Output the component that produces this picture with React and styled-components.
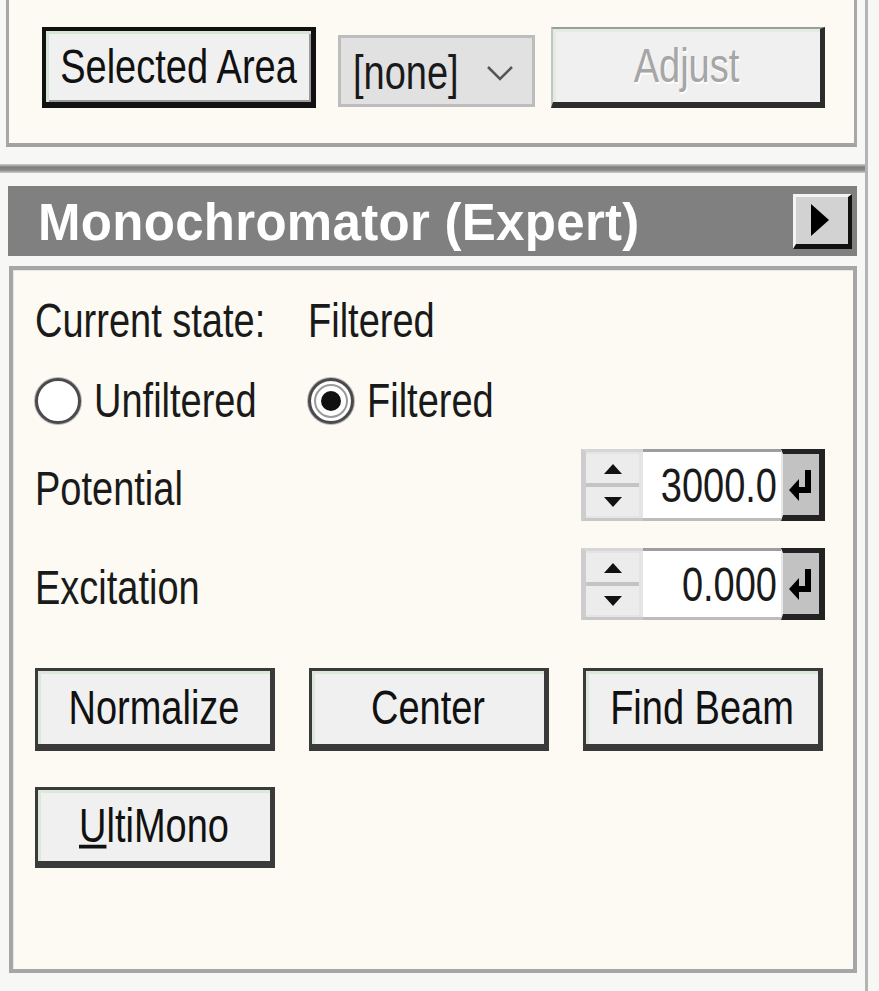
import React from 'react';
import styled, { createGlobalStyle, css } from 'styled-components';

const GlobalStyle = createGlobalStyle`
  html, body {
    margin: 0;
    padding: 0;
    background: #f7f7f6;
  }
  body {
    font-family: "Liberation Sans", Arial, sans-serif;
    color: #1a1a1a;
  }
  * { box-sizing: border-box; }
`;

const App = () => {
  return (
    <>
      <GlobalStyle />
      <Page>
        <Window>
          <TopPanel>
            <ButtonRow>
              <Button $kind="default" $w={274} $h={81}>
                <Txt>Selected Area</Txt>
              </Button>
              <Dropdown>
                <Txt>[none]</Txt>
                <svg width="28" height="16" viewBox="0 0 28 16">
                  <polyline points="2,2 14,14 26,2" fill="none" stroke="#555" strokeWidth="2.5" />
                </svg>
              </Dropdown>
              <Button $kind="disabled" $w={274} $h={81}>
                <Txt>Adjust</Txt>
              </Button>
            </ButtonRow>
          </TopPanel>

          <Gap $h={17} />
          <Rule />
          <Gap $h={13} />

          <Header>
            <HeaderTitle>Monochromator (Expert)</HeaderTitle>
            <HeaderButton>
              <svg width="22" height="34" viewBox="0 0 22 34">
                <polygon points="2,1 20,17 2,33" fill="#000" />
              </svg>
            </HeaderButton>
          </Header>

          <Gap $h={10} />

          <ContentBox>
            <TwoCol $mt={23} $h={56}>
              <Txt>Current state:</Txt>
              <Txt>Filtered</Txt>
            </TwoCol>

            <TwoCol $mt={24} $h={56}>
              <RadioItem>
                <Radio />
                <Txt>Unfiltered</Txt>
              </RadioItem>
              <RadioItem>
                <Radio $checked />
                <Txt>Filtered</Txt>
              </RadioItem>
            </TwoCol>

            <FieldRow $mt={20}>
              <Txt>Potential</Txt>
              <Spinner value="3000.0" />
            </FieldRow>

            <FieldRow $mt={27}>
              <Txt>Excitation</Txt>
              <Spinner value="0.000" />
            </FieldRow>

            <ButtonGrid $mt={48}>
              <Button $h={83}><Txt>Normalize</Txt></Button>
              <Button $h={83}><Txt>Center</Txt></Button>
              <Button $h={83}><Txt>Find Beam</Txt></Button>
            </ButtonGrid>

            <ButtonGrid $mt={36}>
              <Button $h={81}><Txt><u>U</u>ltiMono</Txt></Button>
            </ButtonGrid>
          </ContentBox>
        </Window>
      </Page>
    </>
  );
};

const Spinner = ({ value }) => (
  <SpinBox>
    <SpinArrows>
      <SpinHalf>
        <svg width="20" height="12" viewBox="0 0 20 12">
          <polygon points="10,1 19,11 1,11" fill="#111" />
        </svg>
      </SpinHalf>
      <SpinHalf $bottom>
        <svg width="20" height="12" viewBox="0 0 20 12">
          <polygon points="1,1 19,1 10,11" fill="#111" />
        </svg>
      </SpinHalf>
    </SpinArrows>
    <SpinField>
      <Txt>{value}</Txt>
    </SpinField>
    <EnterButton>
      <svg width="26" height="36" viewBox="0 0 26 36">
        <rect x="17" y="3" width="6" height="23" fill="#000" />
        <rect x="9" y="20" width="14" height="6" fill="#000" />
        <polygon points="1,23 11,12 11,34" fill="#000" />
      </svg>
    </EnterButton>
  </SpinBox>
);

// Styled components
const Page = styled.div`
  width: 879px;
  height: 991px;
  overflow: hidden;
  background: #f7f7f6;
`;

const Window = styled.div`
  width: 868px;
  height: 100%;
  padding: 0 8px 0 6px;
  border-right: 3px solid #b4b4b4;
  display: flex;
  flex-direction: column;
`;

const Txt = styled.span`
  display: inline-block;
  font-size: 38px;
  line-height: 1;
  transform: scaleY(1.25);
  white-space: nowrap;
`;

const TopPanel = styled.div`
  height: 147px;
  background: #fcfaf2;
  border-left: 3px solid #a8a8a8;
  border-right: 3px solid #a8a8a8;
  border-bottom: 4px solid #a2a2a2;
  padding: 27px 0 0 33px;
`;

const ButtonRow = styled.div`
  display: flex;
  align-items: flex-start;
`;

const Button = styled.div`
  width: ${p => (p.$w ? `${p.$w}px` : '100%')};
  height: ${p => p.$h}px;
  display: flex;
  align-items: center;
  justify-content: center;
  background: #f0f0f0;
  border-style: solid;
  border-color: #3a3a3a;
  border-width: 3px 5px 7px 3px;
  box-shadow: inset 3px 3px 0 #dce9da;
  color: #111;

  ${p => p.$kind === 'default' && css`
    border-color: #111;
    border-width: 4px 5px 6px 4px;
    box-shadow: inset 3px 3px 0 #d6e6d4, inset -2px -2px 0 #9a9a9a;
  `}

  ${p => p.$kind === 'disabled' && css`
    border-color: #9c9c9c #2c2c2c #2c2c2c #c4c4c4;
    border-width: 2px 5px 6px 2px;
    box-shadow: inset 3px 3px 0 #e2ece0;
    color: #a6a6a6;
    text-shadow: 1px 1px 0 #ffffff;
  `}
`;

const Dropdown = styled.div`
  width: 197px;
  height: 72px;
  margin: 8px 16px 0 22px;
  background: #e1e1e1;
  border: 3px solid #bdbdbd;
  display: flex;
  align-items: center;
  justify-content: space-between;
  padding: 4px 18px 0 12px;
  color: #1a1a1a;
`;

const Gap = styled.div`
  height: ${p => p.$h}px;
  flex-shrink: 0;
`;

const Rule = styled.div`
  height: 9px;
  margin: 0 -8px 0 -6px;
  background: linear-gradient(#d0d0d0, #7e7e7e 35%, #8c8c8c 70%, #cfcfcf);
`;

const Header = styled.div`
  height: 70px;
  margin-left: 2px;
  background: #808080;
  display: flex;
  align-items: center;
  justify-content: space-between;
  padding: 0 5px 0 30px;
`;

const HeaderTitle = styled.div`
  color: #ffffff;
  font-size: 51px;
  font-weight: bold;
  letter-spacing: 0.3px;
  line-height: 1;
  margin-top: 2px;
`;

const HeaderButton = styled.div`
  width: 59px;
  height: 55px;
  background: #d2d2d2;
  border-style: solid;
  border-width: 3px 4px 5px 3px;
  border-color: #f4f4f4 #111 #111 #f4f4f4;
  display: flex;
  align-items: center;
  justify-content: center;
  padding-right: 4px;
`;

const ContentBox = styled.div`
  height: 707px;
  margin-left: 3px;
  background: #fcfaf2;
  border: 4px solid #a6a6a6;
  box-shadow: inset 1px 1px 0 #e6e6e6;
  padding: 0 28px 0 22px;
  display: flex;
  flex-direction: column;
`;

const TwoCol = styled.div`
  margin-top: ${p => p.$mt}px;
  height: ${p => p.$h}px;
  display: grid;
  grid-template-columns: 273px auto;
  align-items: center;
`;

const RadioItem = styled.div`
  display: flex;
  align-items: center;
  gap: 13px;
`;

const Radio = styled.span`
  width: 46px;
  height: 46px;
  border-radius: 50%;
  background: #ffffff;
  border: 3px solid #4a4a4a;
  box-shadow: 0 0 0 1px #b8b8b8;
  position: relative;
  flex-shrink: 0;

  ${p => p.$checked && css`
    box-shadow: 0 0 0 1px #b8b8b8, inset 0 0 0 3px #ffffff, inset 0 0 0 5px #9a9a9a;
    &::after {
      content: '';
      position: absolute;
      left: 50%;
      top: 50%;
      width: 20px;
      height: 20px;
      margin: -10px 0 0 -10px;
      border-radius: 50%;
      background: #111;
    }
  `}
`;

const FieldRow = styled.div`
  margin-top: ${p => p.$mt}px;
  display: flex;
  align-items: center;
  justify-content: space-between;

  & > ${Txt} {
    margin-top: 8px;
  }
`;

const SpinBox = styled.div`
  width: 244px;
  height: 72px;
  display: flex;
`;

const SpinArrows = styled.div`
  width: 62px;
  display: flex;
  flex-direction: column;
  background: #e4e4e4;
  border-left: 5px solid #cdcdcd;
  border-top: 3px solid #d6d6d6;
  border-bottom: 3px solid #c8c8c8;
  padding: 2px 4px 2px 0;
`;

const SpinHalf = styled.div`
  flex: 1;
  display: flex;
  align-items: center;
  justify-content: center;
  background: #ececec;
  ${p => p.$bottom && css`
    border-top: 4px solid #c4c4c4;
  `}
`;

const SpinField = styled.div`
  width: 138px;
  background: #ffffff;
  border-top: 3px solid #9e9e9e;
  border-bottom: 3px solid #bcbcbc;
  display: flex;
  align-items: center;
  justify-content: flex-end;
  padding: 2px 4px 0 0;
  color: #1a1a1a;
`;

const EnterButton = styled.div`
  width: 44px;
  background: #c2c2c2;
  border-style: solid;
  border-color: #222 #222 #222 #e8e8e8;
  border-width: 5px 6px 6px 2px;
  display: flex;
  align-items: center;
  justify-content: center;
`;

const ButtonGrid = styled.div`
  margin-top: ${p => p.$mt}px;
  display: grid;
  grid-template-columns: repeat(3, 240px);
  column-gap: 34px;
`;

export default App;
